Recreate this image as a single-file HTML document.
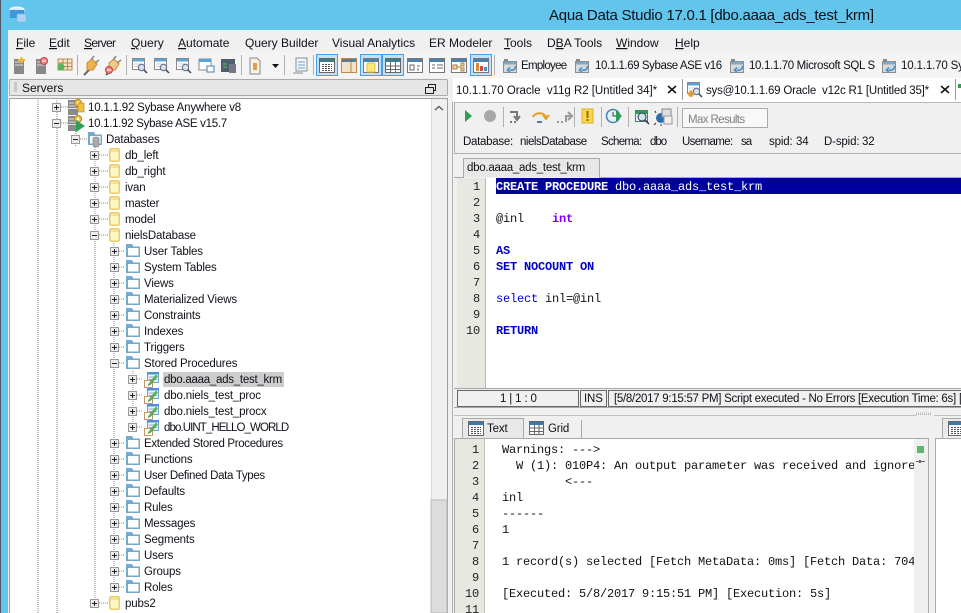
<!DOCTYPE html>
<html><head><meta charset="utf-8"><style>
html,body{margin:0;padding:0;background:#f0f0f0;overflow:hidden}
svg{display:block}
text{font-family:"Liberation Sans",sans-serif;font-size:11.5px;letter-spacing:-.15px;fill:#101018;white-space:pre}
.mn text{font-size:12px;letter-spacing:0}
.m{font-family:"Liberation Mono",monospace;font-size:12px;letter-spacing:-.2px;fill:#111}
.k{font-weight:bold;fill:#0000c8}
.n{font-family:"Liberation Mono",monospace;font-size:12px;letter-spacing:-.2px;text-anchor:end;fill:#222}
.u{text-decoration:underline}
.d{stroke:#888;stroke-width:1;stroke-dasharray:1 1;fill:none}
</style></head><body>
<svg width="961" height="613" viewBox="0 0 961 613" xmlns="http://www.w3.org/2000/svg">
<defs>
<symbol id="plus" width="9" height="9" viewBox="0 0 9 9"><rect x=".5" y=".5" width="8" height="8" fill="#ececec" stroke="#999"/><path d="M2 4.500h5M4.500 2v5" stroke="#222"/></symbol>
<symbol id="minus" width="9" height="9" viewBox="0 0 9 9"><rect x=".5" y=".5" width="8" height="8" fill="#ececec" stroke="#999"/><path d="M2 4.500h5" stroke="#222"/></symbol>
<symbol id="folder" width="15" height="14" viewBox="0 0 15 14"><path d="M0 0h6l1.500 2.500H14V13H0z" fill="#74a9cb"/><rect x="2" y="4" width="10.500" height="7.500" fill="#fff"/></symbol>
<symbol id="db" width="11" height="14" viewBox="0 0 11 14"><rect x=".75" y=".75" width="9.500" height="12.500" rx="1.500" fill="#fdf7c4" stroke="#ecc96a" stroke-width="1.500"/><path d="M1 3h9" stroke="#ecc96a"/></symbol>
<symbol id="proc" width="16" height="16" viewBox="0 0 16 16"><rect x="3.500" y=".5" width="11" height="10" fill="#e8f2f8" stroke="#6f9fc4"/><rect x="3" y="0" width="12" height="2.500" fill="#4f94c8"/><path d="M5 5h8M5 7.500h8" stroke="#9ab"/><rect x=".5" y="8.500" width="8" height="7" fill="#fff" stroke="#c9995c"/><path d="M5 11.500 12 3l1.500 1.500-7 8-2.500 1z" fill="#58b848" stroke="#2f7a2f" stroke-width=".5"/></symbol>
<symbol id="srv" width="16" height="18" viewBox="0 0 16 18"><rect x="0" y="2" width="10" height="15" fill="#8a8a8a"/><path d="M1 5h8M1 8h8" stroke="#ddd"/><rect x="0" y="10" width="10" height="1" fill="#ddd"/><circle cx="10" cy="5" r="3.500" fill="#f3c24b" stroke="#b78418"/><circle cx="10" cy="5" r="1.200" fill="#fff"/></symbol>
<symbol id="conn" width="15" height="15" viewBox="0 0 15 15"><rect x="1" y="1" width="4" height="2" fill="#888"/><rect x=".5" y="3.500" width="13" height="11" fill="#d9d9d9" stroke="#8d8d8d"/><rect x="1" y="4" width="12" height="2.500" fill="#7fa9c8"/><path d="M12 8a4 3 0 0 1-5 4M7 9.500 4.500 12 7 14" fill="none" stroke="#3d8fd0" stroke-width="1.600"/></symbol>
<symbol id="win" width="16" height="15" viewBox="0 0 16 15"><rect x=".5" y=".5" width="15" height="14" fill="#fff" stroke="#777"/><rect x="1" y="1" width="14" height="3" fill="#4a7fae"/></symbol>
<symbol id="mag" width="16" height="16" viewBox="0 0 16 16"><rect x=".5" y=".5" width="12" height="11" fill="#fff" stroke="#888"/><rect x="1" y="1" width="11" height="2.500" fill="#5aa5d8"/><path d="M2 6h9M2 8.500h9" stroke="#ccc"/><circle cx="9.500" cy="9.500" r="3.200" fill="#cfe3ea" stroke="#668"/><path d="M12 12l3 3" stroke="#444" stroke-width="1.500"/></symbol>
<symbol id="tb" width="16" height="15" viewBox="0 0 16 15"><rect x=".5" y=".5" width="15" height="14" fill="#fff" stroke="#666"/><rect x="1" y="1" width="14" height="3" fill="#3f78ae"/><path d="M3 6.500h10M3 8.500h10M3 10.500h10M3 12.500h10" stroke="#555" stroke-dasharray="2 1"/></symbol>
</defs>

<!-- frame -->
<rect width="961" height="613" fill="#62c6ec"/>
<rect width="1" height="613" fill="#4a5560"/>
<rect x="8" y="30" width="953" height="583" fill="#f0f0f0"/>
<rect x="8" y="52" width="953" height="26" fill="#f4f4f4"/>

<!-- app icon -->
<ellipse cx="17" cy="10" rx="7" ry="3" fill="#d5eefb" stroke="#fff"/>
<rect x="10" y="10" width="14" height="8" fill="#3f95d6"/>
<rect x="17" y="14" width="9" height="8" fill="#a9d3ee" stroke="#7fb6dc" stroke-width=".6"/>
<text x="549" y="20" style="font-size:15px;letter-spacing:0" textLength="325">Aqua Data Studio 17.0.1 [dbo.aaaa_ads_test_krm]</text>

<!-- menu -->
<g class="mn">
<text x="16" y="47"><tspan class="u">F</tspan>ile</text>
<text x="49" y="47"><tspan class="u">E</tspan>dit</text>
<text x="84" y="47" textLength="32"><tspan class="u">S</tspan>erver</text>
<text x="131" y="47"><tspan class="u">Q</tspan>uery</text>
<text x="178" y="47"><tspan class="u">A</tspan>utomate</text>
<text x="245" y="47">Query Builder</text>
<text x="332" y="47">Visual Analytics</text>
<text x="429" y="47">ER Modeler</text>
<text x="504" y="47"><tspan class="u">T</tspan>ools</text>
<text x="547" y="47">D<tspan class="u">B</tspan>A Tools</text>
<text x="616" y="47"><tspan class="u">W</tspan>indow</text>
<text x="675" y="47"><tspan class="u">H</tspan>elp</text>
</g>

<!-- main toolbar -->
<g fill="#b0b0b0">
<rect x="77" y="55" width="1" height="20"/><rect x="126" y="55" width="1" height="20"/><rect x="241" y="55" width="1" height="20"/><rect x="284" y="55" width="1" height="20"/><rect x="313" y="55" width="1" height="20"/><rect x="494" y="55" width="1" height="20"/>
</g>
<g>
<rect x="14" y="59" width="10" height="15" fill="#888"/><path d="M15 62h8M15 65h8" stroke="#ddd"/><path d="M18 60h7M21.500 57v6" stroke="#f2b632" stroke-width="2"/>
<rect x="36" y="59" width="10" height="15" fill="#888"/><path d="M37 62h8M37 65h8" stroke="#ddd"/><circle cx="44" cy="61" r="3.500" fill="#e88" stroke="#b44"/><path d="M42 61h4" stroke="#fff"/>
<path d="M58 59h14v11H58z" fill="#f2e3c8" stroke="#b98b50"/><path d="M58 63h14M58 66.500h14M63 59v11M67.500 59v11" stroke="#b98b50"/><circle cx="61" cy="67" r="3.500" fill="#58b45c"/>
<path d="M84 75l6-6" stroke="#666" stroke-width="2"/><path d="M87 63l5-4 5 5-4 6-6 0z" fill="#f2b24f" stroke="#c98a30"/><path d="M94 56l-3 4M99 60l-4 3" stroke="#888" stroke-width="1.500"/>
<path d="M106 75l6-6" stroke="#666" stroke-width="2"/><path d="M109 63l5-4 5 5-4 6-6 0z" fill="#f2c88a" stroke="#c98a30"/><path d="M116 56l-3 4M121 60l-4 3" stroke="#888" stroke-width="1.500"/><circle cx="109" cy="70" r="3.500" fill="#e88" stroke="#b44"/><path d="M107 70h4" stroke="#fff"/>
<use href="#mag" x="132" y="58"/><use href="#mag" x="154" y="58"/><use href="#mag" x="176" y="58"/>
<rect x="199" y="59" width="12" height="11" fill="#fff" stroke="#888"/><rect x="199" y="59" width="12" height="3" fill="#5aa5d8"/><rect x="207" y="66" width="7" height="6" fill="#fff" stroke="#4a7fae"/>
<rect x="221" y="59" width="14" height="13" fill="#4e5e6c"/><path d="M223 64h4M223 67h4" stroke="#6c6"/><rect x="229" y="64" width="7" height="9" fill="#778"/>
<path d="M250 58h7l3 3v13h-10z" fill="#f7f2e6" stroke="#888"/><rect x="253" y="63" width="4" height="7" fill="#d9a04e"/>
<path d="M272 64h7l-3.500 4z" fill="#111"/>
<path d="M296 58h11v13h-11zM293 73h10" fill="#f3f6f8" stroke="#8c8c8c"/><path d="M298 62h7M298 65h7M298 68h7" stroke="#6f9fc4"/>
<g fill="#c4e0f8" stroke="#46a0f0"><rect x="316.500" y="54.500" width="21" height="21"/><rect x="360.500" y="54.500" width="21" height="21"/><rect x="382.500" y="54.500" width="21" height="21"/><rect x="470.500" y="54.500" width="21" height="21"/></g>
<use href="#tb" x="319" y="58"/>
<rect x="341.500" y="58.500" width="15" height="14" fill="#f3e2c8" stroke="#b98b50"/><rect x="342" y="59" width="14" height="3" fill="#4a7fae"/><path d="M351 62v10" stroke="#b98b50"/>
<rect x="363.500" y="58.500" width="15" height="14" fill="#fff" stroke="#777"/><rect x="364" y="59" width="14" height="3" fill="#4a7fae"/><rect x="367" y="63" width="8" height="9" rx="1" fill="#ffe878" stroke="#e0c040"/>
<rect x="385.500" y="58.500" width="15" height="14" fill="#fff" stroke="#666"/><rect x="386" y="59" width="14" height="3" fill="#3f78ae"/><path d="M386 66h14M386 69.500h14M390.500 62v10M395.500 62v10" stroke="#666"/>
<use href="#win" x="407" y="58"/><path d="M410 65h4v5h-4zM417 66h3M418 68v3" fill="none" stroke="#666"/>
<use href="#win" x="429" y="58"/><path d="M432 65h3M432 68h3M437 65h6M437 68h6" stroke="#666"/>
<use href="#win" x="451" y="58"/><path d="M453 65h4v4h-4zM461 63h3v3h-3zM461 68h3v3h-3zM457 67h4" fill="#f2d8a8" stroke="#a87c3e"/>
<use href="#win" x="473" y="58"/><rect x="476" y="63" width="3" height="8" fill="#d98a3c"/><rect x="480" y="66" width="3" height="5" fill="#cf4a3c"/><rect x="484" y="67" width="3" height="4" fill="#4a8fd0"/>
</g>
<use href="#conn" x="503" y="58"/><text x="521" y="69" textLength="46">Employee</text>
<use href="#conn" x="575" y="58"/><text x="595" y="69" textLength="127">10.1.1.69 Sybase ASE v16</text>
<use href="#conn" x="730" y="58"/><text x="749" y="69" textLength="126">10.1.1.70 Microsoft SQL S</text>
<use href="#conn" x="882" y="58"/><text x="901" y="69">10.1.1.70 Sybase</text>

<!-- Servers panel header -->
<rect x="9.500" y="79.500" width="438" height="16" rx="1" fill="#e6e6e6" stroke="#aaa"/>
<path d="M14 83h3M14 85h3M14 87h3M14 89h3M14 91h3" stroke="#aaa"/>
<text x="22" y="92" style="font-size:12px;letter-spacing:0">Servers</text>
<rect x="425.500" y="87.500" width="8" height="6" fill="none" stroke="#222"/><path d="M428.500 87v-2.500h7v6h-2" fill="none" stroke="#222"/>

<!-- tree -->
<rect x="9.500" y="98.500" width="438" height="515" fill="#fff" stroke="#a0a0a0"/>
<rect x="431" y="99" width="16" height="514" fill="#f0f0f0"/>
<rect x="431" y="99" width="1" height="514" fill="#d8d8d8"/>
<path d="M435 110l4-3.500 4 3.500" fill="none" stroke="#555" stroke-width="1.300"/>
<rect x="431" y="500" width="16" height="113" fill="#dcdcdc" stroke="#b8b8b8"/>
<rect x="452" y="102" width="1" height="511" fill="#b0b0b0"/>

<path class="d" d="M38 98V613M57 98V613M95 147V603M114 243V587M133 371V427M75.500 131V147"/>
<path class="d" d="M61 107h7M61 123h7M80 139h7M99 155h9M99 171h9M99 187h9M99 203h9M99 219h9M99 235h9M99 603h9"/>
<path class="d" d="M119 251h6M119 267h6M119 283h6M119 299h6M119 315h6M119 331h6M119 347h6M119 363h6M119 443h6M119 459h6M119 475h6M119 491h6M119 507h6M119 523h6M119 539h6M119 555h6M119 571h6M119 587h6M137 379h6M137 395h6M137 411h6M137 427h6"/>

<use href="#plus" x="52" y="103"/><use href="#srv" x="68" y="98"/><rect x="78" y="103" width="6" height="9" fill="#f0c040" stroke="#b78418" stroke-width=".6"/>
<text x="88" y="111" textLength="153">10.1.1.92 Sybase Anywhere v8</text>
<use href="#minus" x="52" y="119"/><use href="#srv" x="68" y="114"/><path d="M76 120l9 6-9 6z" fill="#2aa050"/>
<text x="88" y="127" textLength="139">10.1.1.92 Sybase ASE v15.7</text>
<use href="#minus" x="71" y="135"/><use href="#folder" x="88" y="132"/><rect x="93" y="137" width="6" height="10" rx="2" fill="#aaa" stroke="#777" stroke-width=".6"/>
<text x="106" y="143">Databases</text>

<use href="#plus" x="90" y="151"/><use href="#db" x="109" y="148"/><text x="125" y="159">db_left</text>
<use href="#plus" x="90" y="167"/><use href="#db" x="109" y="164"/><text x="125" y="175">db_right</text>
<use href="#plus" x="90" y="183"/><use href="#db" x="109" y="180"/><text x="125" y="191">ivan</text>
<use href="#plus" x="90" y="199"/><use href="#db" x="109" y="196"/><text x="125" y="207">master</text>
<use href="#plus" x="90" y="215"/><use href="#db" x="109" y="212"/><text x="125" y="223">model</text>
<use href="#minus" x="90" y="231"/><use href="#db" x="109" y="228"/><text x="125" y="239">nielsDatabase</text>

<use href="#plus" x="110" y="247"/><use href="#folder" x="126" y="244"/><text x="144" y="255">User Tables</text>
<use href="#plus" x="110" y="263"/><use href="#folder" x="126" y="260"/><text x="144" y="271">System Tables</text>
<use href="#plus" x="110" y="279"/><use href="#folder" x="126" y="276"/><text x="144" y="287">Views</text>
<use href="#plus" x="110" y="295"/><use href="#folder" x="126" y="292"/><text x="144" y="303">Materialized Views</text>
<use href="#plus" x="110" y="311"/><use href="#folder" x="126" y="308"/><text x="144" y="319">Constraints</text>
<use href="#plus" x="110" y="327"/><use href="#folder" x="126" y="324"/><text x="144" y="335">Indexes</text>
<use href="#plus" x="110" y="343"/><use href="#folder" x="126" y="340"/><text x="144" y="351">Triggers</text>
<use href="#minus" x="110" y="359"/><use href="#folder" x="126" y="356"/><text x="144" y="367">Stored Procedures</text>

<rect x="163" y="372" width="121" height="15" fill="#cdcdcd"/>
<use href="#plus" x="128" y="375"/><use href="#proc" x="144" y="372"/><text x="164" y="383" textLength="118">dbo.aaaa_ads_test_krm</text>
<use href="#plus" x="128" y="391"/><use href="#proc" x="144" y="388"/><text x="164" y="399">dbo.niels_test_proc</text>
<use href="#plus" x="128" y="407"/><use href="#proc" x="144" y="404"/><text x="164" y="415">dbo.niels_test_procx</text>
<use href="#plus" x="128" y="423"/><use href="#proc" x="144" y="420"/><text x="164" y="431" textLength="125">dbo.UINT_HELLO_WORLD</text>

<use href="#plus" x="110" y="439"/><use href="#folder" x="126" y="436"/><text x="144" y="447" textLength="139">Extended Stored Procedures</text>
<use href="#plus" x="110" y="455"/><use href="#folder" x="126" y="452"/><text x="144" y="463">Functions</text>
<use href="#plus" x="110" y="471"/><use href="#folder" x="126" y="468"/><text x="144" y="479" textLength="121">User Defined Data Types</text>
<use href="#plus" x="110" y="487"/><use href="#folder" x="126" y="484"/><text x="144" y="495">Defaults</text>
<use href="#plus" x="110" y="503"/><use href="#folder" x="126" y="500"/><text x="144" y="511">Rules</text>
<use href="#plus" x="110" y="519"/><use href="#folder" x="126" y="516"/><text x="144" y="527">Messages</text>
<use href="#plus" x="110" y="535"/><use href="#folder" x="126" y="532"/><text x="144" y="543">Segments</text>
<use href="#plus" x="110" y="551"/><use href="#folder" x="126" y="548"/><text x="144" y="559">Users</text>
<use href="#plus" x="110" y="567"/><use href="#folder" x="126" y="564"/><text x="144" y="575">Groups</text>
<use href="#plus" x="110" y="583"/><use href="#folder" x="126" y="580"/><text x="144" y="591">Roles</text>
<use href="#plus" x="90" y="599"/><use href="#db" x="109" y="596"/><text x="125" y="607">pubs2</text>

<!-- right tabs row -->
<rect x="453" y="78" width="508" height="24" fill="#fff"/>
<path d="M682.500 79v21M955.500 79v21" stroke="#999"/>
<text x="456" y="94" textLength="201">10.1.1.70 Oracle  v11g R2 [Untitled 34]*</text>
<path d="M668 86l8 7M676 86l-8 7M941 86l8 7M949 86l-8 7" stroke="#111" stroke-width="1.500"/>
<use href="#mag" x="687" y="82"/><circle cx="691" cy="94" r="3" fill="#e0a030"/>
<text x="706" y="94" textLength="223">sys@10.1.1.69 Oracle  v12c R1 [Untitled 35]*</text>
<rect x="958" y="84" width="3" height="4" fill="#2aa050"/>

<!-- query toolbar -->
<rect x="454" y="102" width="507" height="52" fill="#f0f0f0"/>
<rect x="454" y="102" width="507" height="1" fill="#b8b8b8"/>
<rect x="454" y="153" width="507" height="1" fill="#b0b0b0"/>
<rect x="454" y="102" width="1" height="52" fill="#b0b0b0"/>
<path d="M465 110l7 6-7 6z" fill="#2aa050"/>
<circle cx="490" cy="116" r="6" fill="#a8a8a8"/>
<g fill="#b0b0b0"><rect x="503" y="107" width="1" height="20"/><rect x="574" y="107" width="1" height="20"/><rect x="601" y="107" width="1" height="20"/><rect x="628" y="107" width="1" height="20"/><rect x="677" y="107" width="1" height="20"/></g>
<path d="M510 112h7v6M514 116l3 4 3-4M510 122h2M514 122h2" fill="none" stroke="#777" stroke-width="2"/>
<path d="M533 117a7 6 0 0 1 13 0M543 115l3 4 3-4" fill="none" stroke="#e4a020" stroke-width="2"/><path d="M537 122h5" stroke="#3a7fc8" stroke-width="2"/>
<path d="M557 122h2M561 122h2M566 122v-6h4M568 112l4 4-4 4" fill="none" stroke="#999" stroke-width="2"/>
<rect x="582" y="109" width="11" height="14" fill="#f7d84c" stroke="#d8b030"/><rect x="586.500" y="111" width="2" height="7" fill="#a06a10"/><rect x="586.500" y="119" width="2" height="2" fill="#a06a10"/>
<circle cx="613" cy="116" r="6.500" fill="#e4f0f8" stroke="#4a7fae" stroke-width="1.500"/><path d="M613 112v4h3" stroke="#345" fill="none"/><path d="M616 110l6 6-6 6z" fill="#2aa050"/>
<rect x="635.500" y="110.500" width="12" height="11" fill="#eaf4f4" stroke="#4a7f6a"/><rect x="636" y="111" width="11" height="3" fill="#2aa050"/><circle cx="642" cy="117" r="4" fill="#cfe3ea" stroke="#336"/><path d="M645 120l4 4" stroke="#333" stroke-width="1.500"/>
<circle cx="661" cy="118" r="5" fill="#2e6cb0"/><path d="M656 113l-1-2M656 123l-2 2M661 124v2" stroke="#333"/><rect x="662" y="109" width="9" height="8" fill="#ddd" stroke="#888"/><rect x="664" y="116" width="8" height="8" fill="#eee" stroke="#999"/>
<rect x="682.500" y="108.500" width="85" height="19" fill="#f8f8f8" stroke="#aaa"/>
<text x="688" y="123" style="fill:#808080" textLength="57">Max Results</text>

<text x="463" y="145" textLength="50">Database:</text><text x="520" y="145" textLength="67">nielsDatabase</text>
<text x="601" y="145" textLength="41">Schema:</text><text x="650" y="145" textLength="17">dbo</text>
<text x="682" y="145" textLength="51">Username:</text><text x="741" y="145" textLength="11">sa</text>
<text x="769" y="145">spid:</text><text x="796" y="145">34</text>
<text x="824" y="145">D-spid:</text><text x="862" y="145">32</text>

<!-- editor -->
<rect x="454" y="154" width="507" height="24" fill="#f0f0f0"/>
<path d="M463.500 177V158.500H599.500V177" fill="#e8e8e8" stroke="#aaa"/>
<text x="467" y="171" textLength="118">dbo.aaaa_ads_test_krm</text>
<path d="M454 177.500h10M599 177.500h362" stroke="#aaa"/>
<rect x="454" y="178" width="507" height="210" fill="#fff"/>
<rect x="454" y="178" width="3" height="210" fill="#f0f0f0"/>
<rect x="457" y="178" width="28" height="210" fill="#e8e8e2"/>
<rect x="485" y="178" width="1" height="210" fill="#b8b8b0"/>
<rect x="496" y="178" width="465" height="16" fill="#00009c"/>
<g>
<text class="n" x="480" y="190">1</text><text class="n" x="480" y="206">2</text><text class="n" x="480" y="222">3</text><text class="n" x="480" y="238">4</text><text class="n" x="480" y="254">5</text><text class="n" x="480" y="270">6</text><text class="n" x="480" y="286">7</text><text class="n" x="480" y="302">8</text><text class="n" x="480" y="318">9</text><text class="n" x="480" y="334">10</text>
</g>
<text class="m" x="496" y="190" style="font-weight:bold;fill:#fff">CREATE PROCEDURE <tspan style="font-weight:normal">dbo.aaaa_ads_test_krm</tspan></text>
<text class="m" x="496" y="222">@inl</text><text class="m" x="552" y="222" style="font-weight:bold;fill:#7a00f0">int</text>
<text class="m k" x="496" y="254">AS</text>
<text class="m k" x="496" y="270">SET NOCOUNT ON</text>
<text class="m" x="496" y="302"><tspan style="fill:#0000c8">select</tspan> inl=@inl</text>
<text class="m k" x="496" y="334">RETURN</text>

<!-- status -->
<rect x="454" y="388" width="507" height="20" fill="#f0f0f0"/>
<path d="M454 388.500h507M454 407.500h507" stroke="#a8a8a8"/>
<rect x="457.500" y="390.500" width="121" height="16" fill="#f0f0f0" stroke="#666"/>
<rect x="580.500" y="390.500" width="26" height="16" fill="#f0f0f0" stroke="#666"/>
<rect x="608.500" y="390.500" width="353" height="16" fill="#f0f0f0" stroke="#666"/>
<text x="500" y="402">1 | 1 : 0</text>
<text x="584" y="402">INS</text>
<text x="614" y="402" textLength="342">[5/8/2017 9:15:57 PM] Script executed - No Errors [Execution Time: 6s]</text>
<text x="959" y="402">[</text>
<path d="M454 415.500H916M934 415.500H961" stroke="#c0c0c0"/>
<path d="M916 413h16M916 414.500h16" stroke="#aaa" stroke-dasharray="1 1"/>

<!-- results -->
<path d="M462.500 438V418.500H523.500V438" fill="#e8e8e8" stroke="#aaa"/>
<use href="#tb" x="468" y="421"/><text x="487" y="432">Text</text>
<rect x="529.500" y="421.500" width="14" height="13" fill="#fff" stroke="#666"/><rect x="530" y="422" width="13" height="3" fill="#3f78ae"/><path d="M530 428h13M530 431.500h13M534.500 425v9M539 425v9" stroke="#666"/>
<text x="548" y="432">Grid</text>
<path d="M581.500 420v18" stroke="#aaa"/>
<path d="M454.500 613V438.500H928.500V613" fill="none" stroke="#aaa"/>
<rect x="455" y="439" width="29" height="174" fill="#e8e8e2"/>
<rect x="484" y="439" width="430" height="174" fill="#fff"/>
<rect x="484" y="439" width="1" height="174" fill="#c0c0b8"/>
<rect x="914" y="439" width="14" height="174" fill="#efefef"/>
<rect x="917" y="446" width="7" height="7" fill="#5cb86c"/>
<path d="M916 461.500h9" stroke="#666"/><rect x="919" y="460" width="2" height="3" fill="#666"/>
<g>
<text class="n" x="479" y="453">1</text><text class="n" x="479" y="469">2</text><text class="n" x="479" y="485">3</text><text class="n" x="479" y="501">4</text><text class="n" x="479" y="517">5</text><text class="n" x="479" y="533">6</text><text class="n" x="479" y="549">7</text><text class="n" x="479" y="565">8</text><text class="n" x="479" y="581">9</text><text class="n" x="479" y="597">10</text><text class="n" x="479" y="613">11</text>
</g>
<text class="m" x="502" y="453">Warnings: ---&gt;</text>
<svg x="484" y="439" width="430" height="174" viewBox="484 439 430 174">
<text class="m" x="516" y="469">W (1): 010P4: An output parameter was received and ignored</text>
<text class="m" x="565" y="485">&lt;---</text>
<text class="m" x="502" y="501">inl</text>
<text class="m" x="502" y="517">------</text>
<text class="m" x="502" y="533">1</text>
<text class="m" x="502" y="565">1 record(s) selected [Fetch MetaData: 0ms] [Fetch Data: 704ms]</text>
<text class="m" x="502" y="597">[Executed: 5/8/2017 9:15:51 PM] [Execution: 5s]</text>
</svg>

<!-- right results panel -->
<path d="M942.500 438V418.500H961" fill="#e8e8e8" stroke="#aaa"/>
<use href="#tb" x="948" y="421"/>
<rect x="936" y="439" width="25" height="174" fill="#fff"/>
<path d="M935.500 613V438.500H961" fill="none" stroke="#aaa"/>
</svg>
</body></html>
